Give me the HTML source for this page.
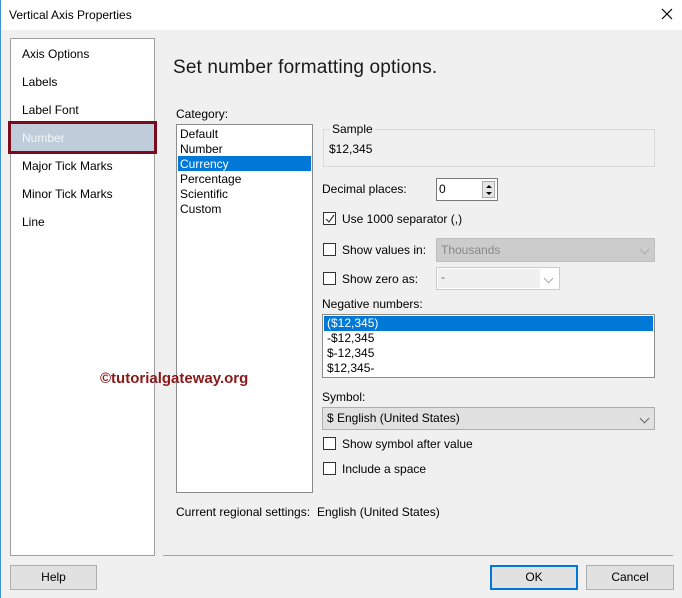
<!DOCTYPE html>
<html><head><meta charset="utf-8"><style>
*{margin:0;padding:0;box-sizing:border-box}
body{width:682px;height:598px;background:#f0f0f0;font-family:"Liberation Sans",sans-serif;font-size:12px;color:#000;position:relative;overflow:hidden}
.a{position:absolute;white-space:nowrap}
.cb{position:absolute;width:13px;height:13px;border:1px solid #333;background:#fff}
.btn{position:absolute;height:25px;background:#e1e1e1;border:1px solid #adadad;text-align:center;line-height:23px}
.dd{position:absolute;right:6px;top:5px;width:7px;height:7px;border-right:1px solid #666;border-bottom:1px solid #666;transform:rotate(45deg)}
</style></head><body>
<div class="a" style="left:0;top:0;width:682px;height:30px;background:#fff"></div>
<div class="a" style="left:0;top:0;width:1px;height:598px;background:#3c8fd8"></div>
<div class="a" style="left:9px;top:8px">Vertical Axis Properties</div>
<svg class="a" style="left:661px;top:8px" width="12" height="12"><path d="M1 1L11 11M11 1L1 11" stroke="#000" stroke-width="1.2"/></svg>

<div class="a" style="left:10px;top:38px;width:145px;height:518px;background:#fff;border:1px solid #a0a0a0"></div>
<div class="a" style="left:22px;top:47px">Axis Options</div>
<div class="a" style="left:22px;top:75px">Labels</div>
<div class="a" style="left:22px;top:103px">Label Font</div>
<div class="a" style="left:8px;top:121px;width:149px;height:33px;background:#bfcddb;border:3px solid #7b0a1c"></div>
<div class="a" style="left:22px;top:131px;color:#f4f6f8">Number</div>
<div class="a" style="left:22px;top:159px">Major Tick Marks</div>
<div class="a" style="left:22px;top:187px">Minor Tick Marks</div>
<div class="a" style="left:22px;top:215px">Line</div>

<div class="a" style="left:173px;top:57px;font-size:19px;color:#1a1a1a;letter-spacing:0.15px">Set number formatting options.</div>

<div class="a" style="left:176px;top:107px">Category:</div>
<div class="a" style="left:176px;top:124px;width:137px;height:369px;background:#fff;border:1px solid #8c8c8c"></div>
<div class="a" style="left:178px;top:156px;width:133px;height:15px;background:#0078d7"></div>
<div class="a" style="left:180px;top:127px;line-height:15px">Default<br>Number<br><span style="color:#fff">Currency</span><br>Percentage<br>Scientific<br>Custom</div>

<div class="a" style="left:323px;top:129px;width:332px;height:38px;border:1px solid #d9d9d9"></div>
<div class="a" style="left:330px;top:122px;background:#f0f0f0;padding:0 2px">Sample</div>
<div class="a" style="left:329px;top:142px">$12,345</div>

<div class="a" style="left:322px;top:182px">Decimal places:</div>
<div class="a" style="left:436px;top:178px;width:62px;height:23px;background:#fff;border:1px solid #7a7a7a"></div>
<div class="a" style="left:439px;top:182px">0</div>
<div class="a" style="left:482px;top:181px;width:13px;height:17px;background:#e6e6e6;border:1px solid #aaa"></div>
<svg class="a" style="left:484px;top:182px" width="10" height="16"><path d="M2 6L5 3L8 6Z M2 10L5 13L8 10Z" fill="#000"/></svg>

<div class="cb" style="left:323px;top:212px"></div>
<svg class="a" style="left:324px;top:213px" width="12" height="12"><path d="M2 6L5 9L10 2" stroke="#333" fill="none" stroke-width="1.2"/></svg>
<div class="a" style="left:342px;top:212px">Use 1000 separator (,)</div>

<div class="cb" style="left:323px;top:243px"></div>
<div class="a" style="left:342px;top:243px">Show values in:</div>
<div class="a" style="left:436px;top:238px;width:219px;height:24px;background:#ccc;border:1px solid #bfbfbf"></div>
<div class="a" style="left:441px;top:243px;color:#888">Thousands</div>
<div class="a" style="left:637px;top:241px;width:14px;height:14px"><div class="dd" style="border-color:#aaa;right:3px"></div></div>

<div class="cb" style="left:323px;top:272px"></div>
<div class="a" style="left:342px;top:272px">Show zero as:</div>
<div class="a" style="left:436px;top:267px;width:124px;height:23px;background:#fff;border:1px solid #ccc"></div>
<div class="a" style="left:438px;top:269px;width:102px;height:19px;background:#f0f0f0"></div>
<div class="a" style="left:441px;top:270px;color:#666">-</div>
<div class="a" style="left:541px;top:270px;width:14px;height:14px"><div class="dd" style="border-color:#aaa;right:3px"></div></div>

<div class="a" style="left:322px;top:297px">Negative numbers:</div>
<div class="a" style="left:322px;top:314px;width:333px;height:64px;background:#fff;border:1px solid #8c8c8c"></div>
<div class="a" style="left:324px;top:316px;width:329px;height:15px;background:#0078d7"></div>
<div class="a" style="left:327px;top:316px;line-height:15px"><span style="color:#fff">($12,345)</span><br>-$12,345<br>$-12,345<br>$12,345-</div>

<div class="a" style="left:322px;top:390px">Symbol:</div>
<div class="a" style="left:322px;top:407px;width:333px;height:23px;background:#e1e1e1;border:1px solid #adadad"></div>
<div class="a" style="left:327px;top:411px">$ English (United States)</div>
<div class="a" style="left:637px;top:410px;width:14px;height:14px"><div class="dd" style="right:3px"></div></div>

<div class="cb" style="left:323px;top:437px"></div>
<div class="a" style="left:342px;top:437px">Show symbol after value</div>
<div class="cb" style="left:323px;top:462px"></div>
<div class="a" style="left:342px;top:462px">Include a space</div>

<div class="a" style="left:100px;top:370px;font-weight:bold;font-size:15px;color:#8b1a1a">©tutorialgateway.org</div>

<div class="a" style="left:176px;top:505px">Current regional settings:</div>
<div class="a" style="left:317px;top:505px">English (United States)</div>

<div class="a" style="left:163px;top:555px;width:510px;height:1px;background:#a0a0a0"></div>

<div class="btn" style="left:10px;top:565px;width:87px">Help</div>
<div class="btn" style="left:490px;top:565px;width:88px;border:2px solid #0078d7;line-height:21px">OK</div>
<div class="btn" style="left:586px;top:565px;width:88px">Cancel</div>
</body></html>
